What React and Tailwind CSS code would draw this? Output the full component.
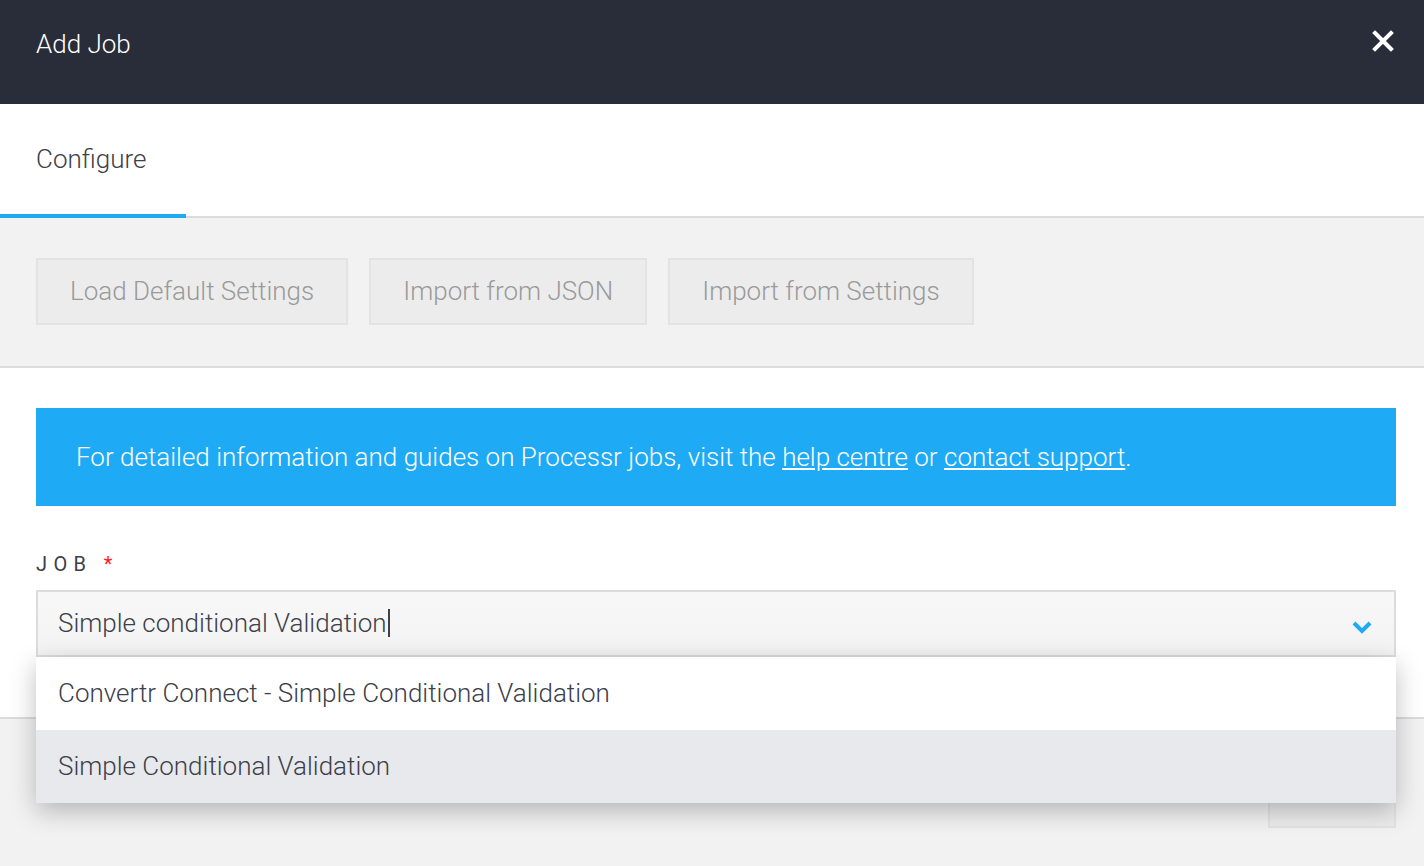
import { useState } from "react";

const buttons = ["Load Default Settings", "Import from JSON", "Import from Settings"];
const options = ["Convertr Connect - Simple Conditional Validation", "Simple Conditional Validation"];

export default function App() {
  const [value] = useState("Simple conditional Validation");

  return (
    <div className="min-h-[866px] bg-[#f2f2f2] font-['Roboto',sans-serif] text-[#3c4049]">
      {/* header */}
      <div className="flex h-[104px] items-start justify-between bg-[#282d39] pl-9 pr-[30px] pt-[26px]">
        <h1 className="text-[26px] font-light leading-[36px] text-white">Add Job</h1>
        <button className="mt-[4px] text-white">
          <svg width="22" height="22" viewBox="0 0 22 22">
            <path d="M3 3 L19 19 M19 3 L3 19" stroke="currentColor" strokeWidth="4" strokeLinecap="square" />
          </svg>
        </button>
      </div>

      {/* tabs */}
      <div className="flex h-[114px] border-b-2 border-[#dcdcdc] bg-white">
        <div className="-mb-[2px] flex items-center border-b-4 border-[#1eaaf1] pl-9 pr-10 text-[26px] font-light text-[#3c4049]">
          Configure
        </div>
      </div>

      {/* actions */}
      <div className="flex gap-[21px] border-b-2 border-[#dcdcdc] px-9 pt-10 pb-[41px]">
        {buttons.map((b) => (
          <button
            key={b}
            className="h-[67px] border-2 border-[#e3e3e3] bg-[#ececec] px-[32px] text-[26px] font-light text-[#9a9a9a]"
          >
            {b}
          </button>
        ))}
      </div>

      {/* form */}
      <div className="border-b-2 border-[#dcdcdc] bg-white pl-9 pr-7 pt-10 pb-[60px]">
        <div className="flex h-[98px] items-center bg-[#1eaaf4] px-10 text-[26px] font-light text-white">
          <p>
            For detailed information and guides on Processr jobs, visit the{" "}
            <a href="#" className="underline">help centre</a> or{" "}
            <a href="#" className="underline">contact support</a>.
          </p>
        </div>

        <label className="mt-[46px] block text-[20px] leading-[24px] tracking-[0.32em] text-[#3c4049]">
          JOB <span className="text-[#ff1a1a]">*</span>
        </label>

        <div className="relative mt-[14px]">
          <div className="flex h-[67px] items-center justify-between border-2 border-[#dcdcdc] bg-gradient-to-b from-[#f8f8f8] to-[#f3f3f3] pl-5 pr-[22px]">
            <span className="text-[26px] font-light text-[#3c4049]">
              {value}
              <span className="ml-[1px] inline-block h-[28px] w-[2px] translate-y-[5px] bg-[#3c4049]" />
            </span>
            <svg width="20" height="14" viewBox="0 0 20 14" className="mt-[6px]">
              <path d="M2 3 L10 11 L18 3" fill="none" stroke="#1eaaf4" strokeWidth="4" />
            </svg>
          </div>

          <ul className="absolute top-[67px] left-0 right-0 z-10 shadow-[0_8px_24px_rgba(0,0,0,0.25)]">
            {options.map((o, i) => (
              <li
                key={o}
                className={`flex h-[73px] items-center pl-[22px] text-[26px] font-light text-[#3c4049] ${
                  i === 1 ? "bg-[#e8e9ec]" : "bg-white"
                }`}
              >
                {o}
              </li>
            ))}
          </ul>
        </div>
      </div>

      {/* footer */}
      <div className="flex justify-end px-7 pt-[42px]">
        <button className="h-[67px] w-[128px] border-2 border-[#e3e3e3] bg-[#ececec]" />
      </div>
    </div>
  );
}
